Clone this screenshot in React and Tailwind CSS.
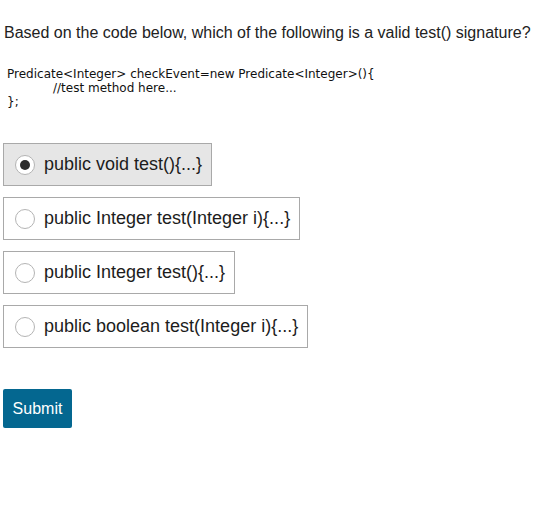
import React, { useState } from 'react';

const options = [
  'public void test(){...}',
  'public Integer test(Integer i){...}',
  'public Integer test(){...}',
  'public boolean test(Integer i){...}',
];

function Radio({ checked }) {
  return (
    <span className="w-[20px] h-[20px] rounded-full border border-[#b4b4b4] bg-white flex items-center justify-center shrink-0">
      {checked && <span className="w-[10px] h-[10px] rounded-full bg-[#2b2b2b]" />}
    </span>
  );
}

export default function App() {
  const [selected, setSelected] = useState(0);

  return (
    <div className="min-h-screen bg-white text-[#222] font-['Liberation_Sans',Arial,sans-serif] px-[3px] pt-[24px]">
      <p className="text-[16px] leading-[18px] pl-[1px]">
        Based on the code below, which of the following is a valid test() signature?
      </p>

      <div className="mt-[25px] pl-[4px] text-[12px] leading-[14px] text-[#111] font-['DejaVu_Sans',Verdana,sans-serif]">
        <div>Predicate&lt;Integer&gt; checkEvent=new Predicate&lt;Integer&gt;(){'{'}</div>
        <div className="pl-[46px]">//test method here...</div>
        <div>{'};'}</div>
      </div>

      <div className="mt-[34px] flex flex-col items-start gap-[11px]">
        {options.map((opt, i) => (
          <button
            key={opt}
            onClick={() => setSelected(i)}
            className={`h-[43px] flex items-center gap-[9px] pl-[11px] pr-[9px] border border-[#a9a9a9] text-[18px] text-[#1c1c1c] ${
              selected === i ? 'bg-[#e6e6e6]' : 'bg-white'
            }`}
          >
            <Radio checked={selected === i} />
            <span>{opt}</span>
          </button>
        ))}
      </div>

      <button className="mt-[41px] h-[39px] w-[69px] rounded-[2px] bg-[#046790] text-white text-[16px]">
        Submit
      </button>
    </div>
  );
}
